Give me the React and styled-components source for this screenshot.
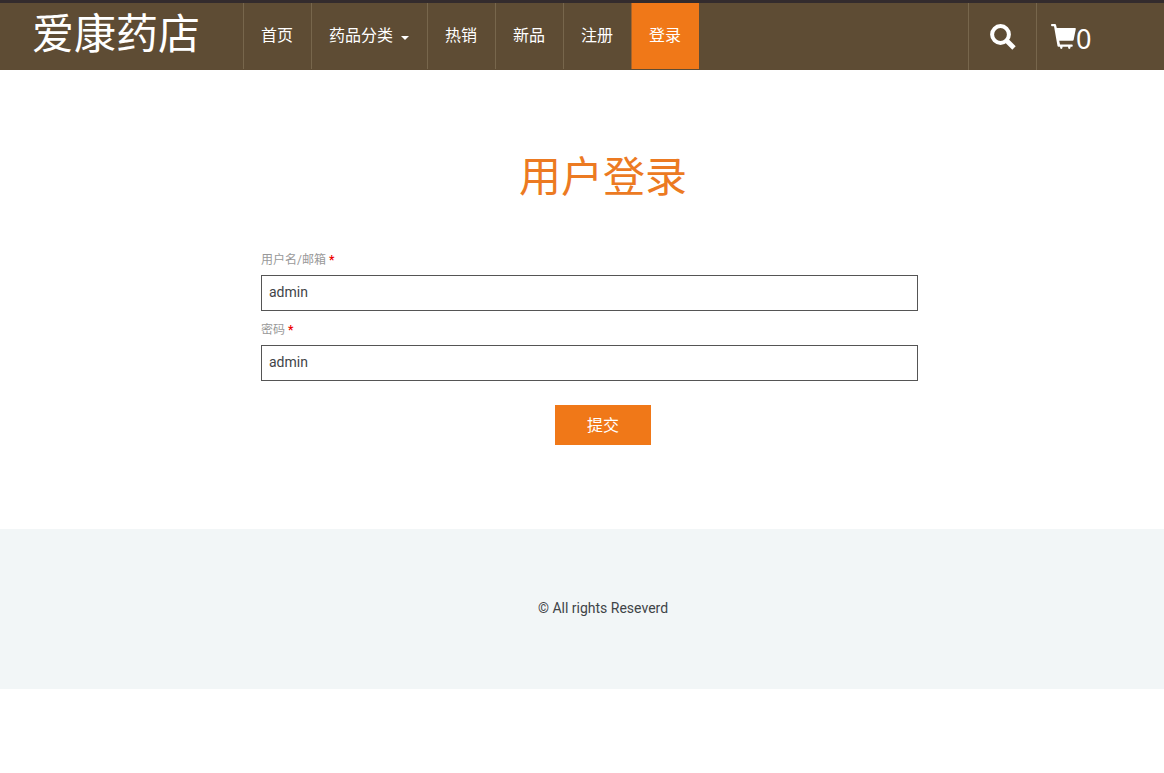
import React from "react";
import styled, { createGlobalStyle } from "styled-components";

const GlobalStyle = createGlobalStyle`
  *, *::before, *::after { box-sizing: border-box; }
  body {
    margin: 0;
    background: #fff;
    color: #3f4447;
    font-family: Roboto, "Noto Sans CJK SC", sans-serif;
    font-size: 14px;
    line-height: 20px;
  }
`;

const Header = styled.header`
  display: flex;
  height: 70px;
  border-top: 3px solid #332b2d;
  background: #5e4c34;
`;

const Logo = styled.a`
  width: 243px;
  flex: none;
  padding-left: 32px;
  color: #fff;
  font-size: 42px;
  line-height: 64px;
  text-decoration: none;
  white-space: nowrap;
`;

const Nav = styled.nav`
  display: flex;
  flex: 1;
  padding-bottom: 1px;
`;

const NavLink = styled.a`
  display: flex;
  align-items: center;
  gap: 8px;
  padding: 0 18px 0 17px;
  border-left: 1px solid ${(p) => (p.$active ? "#a8642a" : "#77664c")};
  background: ${(p) => (p.$active ? "#f07818" : "transparent")};
  color: #fff;
  font-size: 16px;
  text-decoration: none;
  white-space: nowrap;
`;

const Caret = styled.span`
  margin-top: 3px;
  border: 4px solid transparent;
  border-top-color: #fff;
  border-bottom: 0;
`;

const Tools = styled.div`
  display: flex;
  width: 196px;
  flex: none;
`;

const SearchButton = styled.button`
  display: flex;
  align-items: center;
  justify-content: center;
  width: 68px;
  padding: 0;
  border: 0;
  border-left: 1px solid #77664c;
  background: none;
  color: #fff;
  cursor: pointer;
`;

const CartLink = styled.a`
  display: flex;
  flex: 1;
  align-items: center;
  padding-left: 14px;
  border-left: 1px solid #77664c;
  color: #fff;
  font-family: "Noto Sans", sans-serif;
  font-size: 27px;
  text-decoration: none;
`;

const CartCount = styled.span`
  padding-top: 5px;
`;

const Main = styled.main`
  padding: 81px 0 84px 42px;
`;

const Title = styled.h1`
  margin: 0 0 41px;
  color: #ec7a22;
  font-size: 42px;
  font-weight: 400;
  line-height: 54px;
  text-align: center;
`;

const Form = styled.form`
  display: flex;
  flex-direction: column;
  max-width: 684px;
  margin: 0 auto;
`;

const Label = styled.label`
  padding-top: 4px;
  color: #999;
  font-size: 12px;
  line-height: 20px;
`;

const Required = styled.span`
  color: #e00;
  font-weight: 700;
`;

const Input = styled.input`
  height: 36px;
  margin: 5px 27px 5px 0;
  padding: 0 7px 2px;
  border: 1px solid #555;
  border-radius: 0;
  background: #fff;
  color: #3f4447;
  font-family: inherit;
  font-size: 14px;
`;

const Submit = styled.button`
  align-self: center;
  width: 96px;
  height: 40px;
  margin-top: 19px;
  padding: 0 0 2px;
  border: 0;
  background: #f07818;
  color: #fff;
  font-family: inherit;
  font-size: 16px;
  cursor: pointer;
`;

const Footer = styled.footer`
  padding: 69px 0 71px 42px;
  background: #f2f6f7;
  text-align: center;
`;

const Copyright = styled.p`
  margin: 0;
`;

const links = [
  { text: "首页" },
  { text: "药品分类", menu: true },
  { text: "热销" },
  { text: "新品" },
  { text: "注册" },
  { text: "登录", active: true },
];

const SearchIcon = () => (
  <svg width="26" height="26" viewBox="0 0 26 26" fill="none" stroke="currentColor" aria-hidden="true">
    <circle cx="10.5" cy="10.5" r="8.4" strokeWidth="4" />
    <path d="M16.5 16.5L24 24" strokeWidth="4.8" />
  </svg>
);

const CartIcon = () => (
  <svg width="25" height="26" viewBox="0 0 25 26" fill="currentColor" aria-hidden="true">
    <path d="M.8 0H4q.8 0 1 .8L5.8 4H24q1 0 .8 1L22.6 16q-.2.8-1 .8H8.200l.8 3.700H21q.7 0 .7.7v.900q0 .7-.7.7H19.500v.800q0 1.400-1.200 1.400t-1.200-1.400v-.8H11.500v.800q0 1.400-1.200 1.400t-1.200-1.400v-.8H7.500q-.8 0-1-.8L3 2.200H.8Q0 2.200 0 1.100T.8 0z" />
  </svg>
);

export default function App() {
  return (
    <>
      <GlobalStyle />
      <Header>
        <Logo href="#">爱康药店</Logo>
        <Nav>
          {links.map((l) => (
            <NavLink key={l.text} href="#" $active={l.active} aria-current={l.active ? "page" : undefined}>
              {l.text}
              {l.menu && <Caret />}
            </NavLink>
          ))}
        </Nav>
        <Tools>
          <SearchButton type="button" aria-label="搜索">
            <SearchIcon />
          </SearchButton>
          <CartLink href="#" aria-label="购物车 0">
            <CartIcon />
            <CartCount>0</CartCount>
          </CartLink>
        </Tools>
      </Header>
      <Main>
        <Title>用户登录</Title>
        <Form onSubmit={(e) => e.preventDefault()}>
          <Label htmlFor="username">
            用户名/邮箱 <Required>*</Required>
          </Label>
          <Input id="username" type="text" defaultValue="admin" required />
          <Label htmlFor="password">
            密码 <Required>*</Required>
          </Label>
          <Input id="password" type="text" defaultValue="admin" required />
          <Submit type="submit">提交</Submit>
        </Form>
      </Main>
      <Footer>
        <Copyright>© All rights Reseverd</Copyright>
      </Footer>
    </>
  );
}
